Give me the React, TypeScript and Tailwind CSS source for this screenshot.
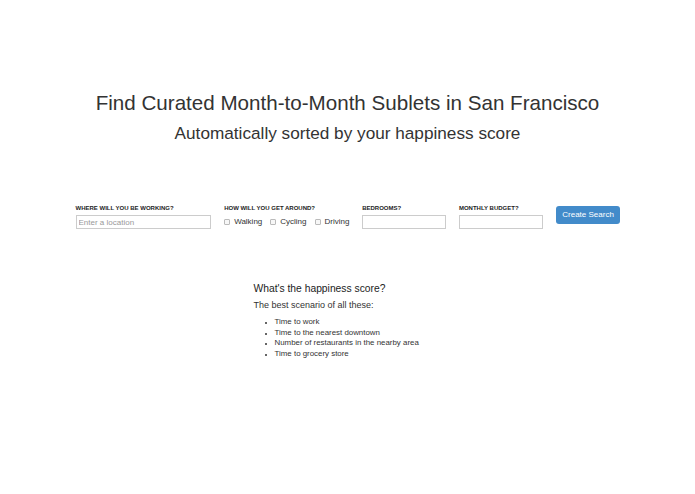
export default function App() {
  const factors = [
    'Time to work',
    'Time to the nearest downtown',
    'Number of restaurants in the nearby area',
    'Time to grocery store',
  ]
  const modes = ['Walking', 'Cycling', 'Driving']

  return (
    <div className="min-h-[494px] bg-white text-[#333] font-['Liberation_Sans',Arial,sans-serif]">
      <div className="pt-[90px] text-center">
        <h1 className="text-[20.6px] leading-[26px]">Find Curated Month-to-Month Sublets in San Francisco</h1>
        <h2 className="mt-[6px] text-[17.2px] leading-[22px]">Automatically sorted by your happiness score</h2>
      </div>

      <div className="mx-auto mt-[60px] flex w-[546px] items-start gap-[13px] pl-[1px]">
        <div className="w-[136px]">
          <label className="block text-[6px] font-bold uppercase leading-[8px] text-[#222]">Where will you be working?</label>
          <input
            className="mt-[3px] block h-[14px] w-full border border-[#ccc] px-[2px] text-[8px] outline-none placeholder:text-[#999]"
            placeholder="Enter a location"
          />
        </div>
        <div className="w-[125px]">
          <label className="block text-[6px] font-bold uppercase leading-[8px] text-[#222]">How will you get around?</label>
          <div className="mt-[3px] flex h-[14px] items-center gap-[8px]">
            {modes.map((m) => (
              <span key={m} className="flex items-center gap-[4px] text-[8px]">
                <span className="inline-block h-[6px] w-[6px] rounded-[1px] border border-[#bbb] bg-[#f7f7f7]" />
                {m}
              </span>
            ))}
          </div>
        </div>
        <div className="w-[84px]">
          <label className="block text-[6px] font-bold uppercase leading-[8px] text-[#222]">Bedrooms?</label>
          <input className="mt-[3px] block h-[14px] w-full border border-[#ccc] outline-none" />
        </div>
        <div className="w-[84px]">
          <label className="block text-[6px] font-bold uppercase leading-[8px] text-[#222]">Monthly budget?</label>
          <input className="mt-[3px] block h-[14px] w-full border border-[#ccc] outline-none" />
        </div>
        <button className="mt-[2px] h-[18px] w-[65px] rounded-[3px] bg-[#428bca] text-[8px] text-white">Create Search</button>
      </div>

      <div className="mx-auto mt-[53px] w-[188px]">
        <h3 className="text-[10.3px] leading-[14px] text-[#222]">What's the happiness score?</h3>
        <p className="mt-[4px] text-[9px] leading-[10px]">The best scenario of all these:</p>
        <ul className="mt-[7px] list-disc pl-[21px] text-[7.9px] leading-[10.7px] marker:text-[6px]">
          {factors.map((f) => (
            <li key={f}>{f}</li>
          ))}
        </ul>
      </div>
    </div>
  )
}
